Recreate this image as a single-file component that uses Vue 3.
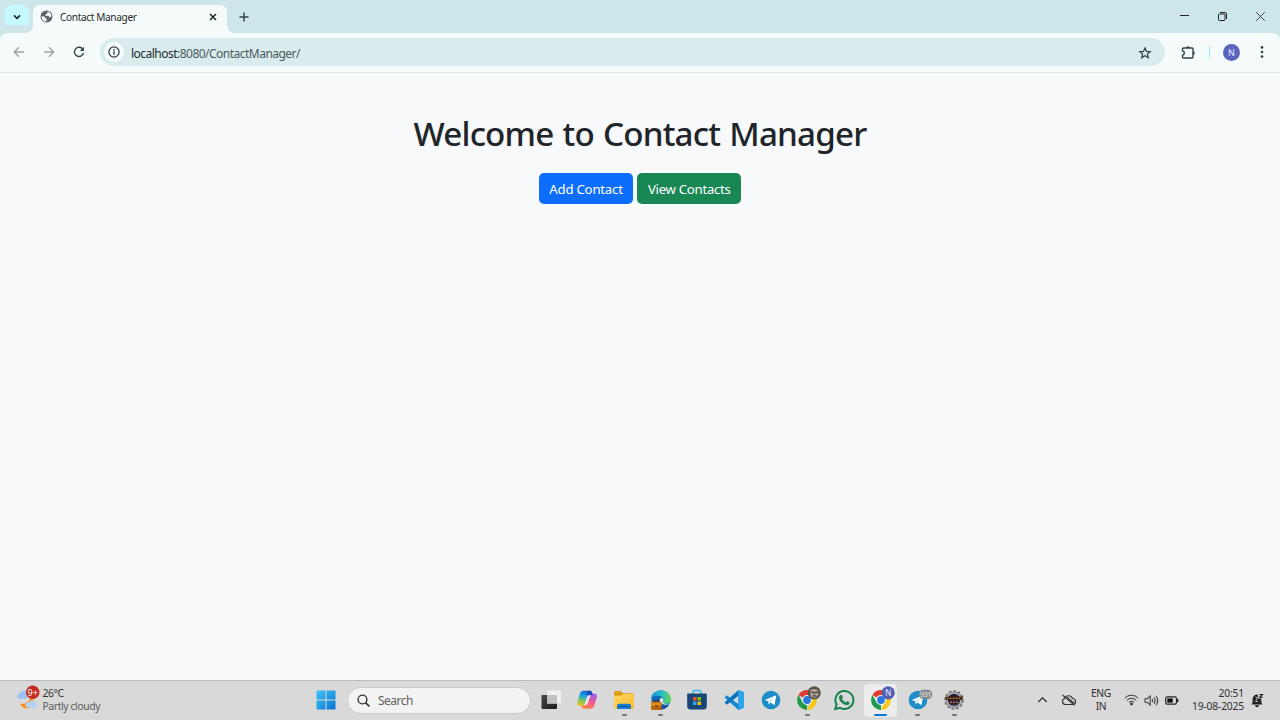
<script setup>
const tray = ['ENG', 'IN']
</script>

<template>
  <div class="screen">
    <header class="tabs">
      <div class="tab-search">
        <svg width="10" height="10" viewBox="0 0 10 10"><path d="M2 3.4 5 6.4 8 3.4" fill="none" stroke="#14282b" stroke-width="1.6" /></svg>
      </div>
      <div class="tab">
        <svg class="globe" width="13" height="13" viewBox="0 0 13 13">
          <circle cx="6.5" cy="6.5" r="6" fill="#5c6369" />
          <path d="M1.5 6.2C3.6 6 5.6 6.6 5.5 8.2L7 9.1 6.2 11.6C3.2 11.5 1.3 9 1.5 6.2ZM7.3 1.5C9.8 1.7 11.4 3.7 11.6 6.2L9.6 7.7 8.7 5.9 5.5 5.8 5.6 4.1 7.3 3.8Z" fill="#eef4f5" />
        </svg>
        <span class="tab-title">Contact Manager</span>
        <svg class="close" width="8" height="8" viewBox="0 0 8 8"><path d="M1 1 7 7M7 1 1 7" stroke="#14282b" stroke-width="1.5" /></svg>
      </div>
      <svg class="plus" width="10" height="10" viewBox="0 0 10 10"><path d="M5 .5V9.5M.5 5H9.5" stroke="#2c4347" stroke-width="1.4" /></svg>
      <div class="window-controls">
        <svg width="11" height="11" viewBox="0 0 11 11"><path d="M1 4.5H10" stroke="#222" /></svg>
        <svg width="11" height="11" viewBox="0 0 11 11"><rect x="1.5" y="3" width="6.5" height="6.5" rx="1" fill="none" stroke="#222" /><path d="M3 1.5H8Q9.5 1.5 9.5 3V8" fill="none" stroke="#222" /></svg>
        <svg width="11" height="11" viewBox="0 0 11 11"><path d="M1.2 1.2 9.8 9.8M9.8 1.2 1.2 9.8" stroke="#333" stroke-width=".9" /></svg>
      </div>
    </header>

    <nav class="toolbar">
      <svg class="nav-icon" width="12" height="12" viewBox="0 0 12 12"><path d="M11 6H1.5M6 1.2 1.3 6 6 10.8" fill="none" stroke="#9ba5a7" stroke-width="1.4" /></svg>
      <svg class="nav-icon" width="12" height="12" viewBox="0 0 12 12"><path d="M1 6H10.5M6 1.2 10.7 6 6 10.8" fill="none" stroke="#9ba5a7" stroke-width="1.4" /></svg>
      <svg class="nav-icon" width="12" height="12" viewBox="0 0 12 12"><path d="M10 3.5A4.6 4.6 0 1 0 10.5 7" fill="none" stroke="#2c4347" stroke-width="1.4" /><path d="M10.9.8V4.9H6.8Z" fill="#2c4347" /></svg>
      <div class="address">
        <span class="info">
          <svg width="12" height="12" viewBox="0 0 12 12"><circle cx="6" cy="6" r="5.1" fill="none" stroke="#27373a" stroke-width="1.2" /><path d="M6 5.2V8.8M6 3.1V4.4" stroke="#27373a" stroke-width="1.3" /></svg>
        </span>
        <span class="url"><b>localhost</b>:8080/ContactManager/</span>
        <svg class="star" width="14" height="14" viewBox="0 0 14 14"><path d="M7 1.9 8.5 5.4 12.2 5.7 9.4 8.1 10.3 11.8 7 9.8 3.7 11.8 4.6 8.1 1.8 5.7 5.5 5.4Z" fill="none" stroke="#2c4347" stroke-width="1.2" /></svg>
      </div>
      <svg class="ext" width="15" height="15" viewBox="0 0 15 15"><path d="M2.5 3H11Q12 3 12 4V12Q12 13 11 13H2.5Q1.5 13 1.5 12V10.2C3.9 9.8 3.9 6.2 1.5 5.8V4Q1.5 3 2.5 3Z" fill="none" stroke="#2c4347" stroke-width="1.4" /><path d="M5.2 3A1.7 1.7 0 0 1 8.6 3ZM12 6.2A1.8 1.8 0 0 1 12 9.8Z" fill="#2c4347" /></svg>
      <i class="divider"></i>
      <span class="avatar">N</span>
      <svg class="dots" width="4" height="14" viewBox="0 0 4 14"><g fill="#2c4347"><circle cx="2" cy="2.4" r="1.35" /><circle cx="2" cy="7" r="1.35" /><circle cx="2" cy="11.6" r="1.35" /></g></svg>
    </nav>

    <main class="page">
      <h1>Welcome to Contact Manager</h1>
      <div class="actions">
        <a class="btn add">Add Contact</a>
        <a class="btn view">View Contacts</a>
      </div>
    </main>

    <footer class="taskbar">
      <div class="weather">
        <svg width="26" height="26" viewBox="0 0 26 26">
          <path d="M5 18.5C10 20 14 17 15.5 12 20 14 20 22 13 23.5 9 24 6 21.5 5 18.5Z" fill="#f3972b" />
          <path d="M4.5 13.8A2.9 2.9 0 0 1 4.5 8.2 5 5 0 0 1 12 7V13.8Z" fill="#9dc3f5" />
          <path d="M13 22.6A2.6 2.6 0 0 1 13.6 17.4 4 4 0 0 1 20.5 18 2.4 2.4 0 0 1 20.8 22.6Z" fill="#b7d2f8" />
          <circle cx="17.7" cy="7.3" r="6.8" fill="#c52b20" />
          <text x="17.7" y="10.5" text-anchor="middle" fill="#fff" font-size="9">9+</text>
        </svg>
        <div class="weather-text"><span>26°C</span><span class="muted">Partly cloudy</span></div>
      </div>

      <div class="apps">
        <svg class="start" width="20" height="20" viewBox="0 0 20 20">
          <defs><linearGradient id="win" x1="0" y1="0" x2="1" y2="1"><stop stop-color="#3fc4f5" /><stop offset="1" stop-color="#0873d3" /></linearGradient></defs>
          <path d="M.5.5H9.5V9.5H.5ZM10.5.5H19.5V9.5H10.5ZM.5 10.5H9.5V19.5H.5ZM10.5 10.5H19.5V19.5H10.5Z" fill="url(#win)" />
        </svg>
        <div class="search">
          <svg width="13" height="13" viewBox="0 0 13 13"><circle cx="5.5" cy="5.5" r="4.4" fill="none" stroke="#333" stroke-width="1.4" /><path d="M8.8 8.8 12 12" stroke="#333" stroke-width="1.7" stroke-linecap="round" /></svg>
          <span>Search</span>
        </div>

        <div class="app">
          <svg width="24" height="24" viewBox="0 0 24 24"><defs><linearGradient id="tv" x1="0" y1="0" x2="1" y2="1"><stop stop-color="#454545" /><stop offset="1" stop-color="#1e1e1e" /></linearGradient></defs><rect x="2.5" y="7" width="15.5" height="14" rx="1" fill="url(#tv)" /><rect x="8" y="2.5" width="14" height="13" rx="1" fill="#f0f0f0" /><path d="M8 7H18V15.5H8Z" fill="#c2c2c2" /></svg>
        </div>
        <div class="app">
          <svg width="24" height="24" viewBox="0 0 24 24">
            <defs>
              <linearGradient id="cp1" x1=".5" y1="0" x2=".25" y2="1"><stop stop-color="#155ed6" /><stop offset=".35" stop-color="#1aa6df" /><stop offset=".65" stop-color="#76c55a" /><stop offset="1" stop-color="#f1c52a" /></linearGradient>
              <linearGradient id="cp2" x1=".7" y1="0" x2=".3" y2="1"><stop stop-color="#a35bea" /><stop offset=".5" stop-color="#ee5792" /><stop offset="1" stop-color="#fb843f" /></linearGradient>
            </defs>
            <path d="M8.2 2.7H15Q16.7 2.7 17.2 5L17.8 7H14.7Q12.7 7 12 9.3L9.8 16.3Q9.1 18 7 18H4.5Q1.5 18 2.3 14L5 5.3Q5.8 2.7 8.2 2.7Z" fill="url(#cp1)" />
            <path d="M15.8 20.8H9Q7.3 20.8 6.8 18.5L6.4 17.5H9Q11.2 17.5 12 14.2L14.2 7.5Q14.8 5.8 17 5.8H19.5Q22.5 5.8 21.7 9.5L19 18.3Q18.2 20.8 15.8 20.8Z" fill="url(#cp2)" />
            <path d="M12.5 2.7H15Q16.7 2.7 17.2 5L17.8 7H14.7Q12.9 7 12.2 8.8Z" fill="#1b49b8" />
            <path d="M12.2 8.8Q12.9 7 14.7 7L15.5 7.6 12.6 15.8Q11.8 17.4 8.6 17.3L9.8 16.3Z" fill="#e9e5ed" />
          </svg>
        </div>
        <div class="app">
          <svg width="24" height="24" viewBox="0 0 24 24"><defs><linearGradient id="fold" x1="0" y1="0" x2="1" y2="1"><stop stop-color="#ffd764" /><stop offset="1" stop-color="#f6bb31" /></linearGradient></defs><path d="M2 4.5Q2 3 3.5 3H9L11 5.2H20.5Q22 5.2 22 7V12H2Z" fill="#df9d18" /><path d="M2 7.8H9.2L11.4 6H21Q22 6 22 7.2V20Q22 21 21 21H3Q2 21 2 20Z" fill="url(#fold)" /><path d="M5 21V18Q5 15.8 7.2 15.8H16.8Q19 15.8 19 18V21Z" fill="#137bd2" /><path d="M7.5 18.5H16.5" stroke="#075696" /></svg>
          <i class="running"></i>
        </div>
        <div class="app">
          <svg width="24" height="24" viewBox="0 0 24 24">
            <defs><linearGradient id="ed" x1="0" y1=".3" x2="1" y2=".4"><stop stop-color="#1592de" /><stop offset=".5" stop-color="#29bdca" /><stop offset="1" stop-color="#61d957" /></linearGradient></defs>
            <circle cx="12" cy="11.8" r="9.6" fill="#1266b8" />
            <path d="M1.8 10.5C3 -.1 20.8-.5 22.2 11 22.2 15.5 16.5 16.8 14.2 14.8 13.1 13.8 14.7 13.2 14.5 11.2 14 7 5.8 6.2 1.8 10.5Z" fill="url(#ed)" />
            <path d="M10 10C7.8 14.5 12 19.4 19.5 17.3 17.3 20.6 14 21.5 12 21.4 8 19 6.6 13 10 10Z" fill="#164f9c" />
            <path d="M11.3 10.2C9.5 13 12 17.3 18.2 16.6L22 15.5C17.5 16.4 14.8 15.9 14.2 14.8 13.2 13.7 14.6 13.3 14.5 11.2Q13 9.4 11.3 10.2Z" fill="#e0e0df" />
            <rect x="2" y="14" width="10.5" height="8" rx="1" fill="#b96409" /><path d="M2 14.5H12.5V17.8H2Z" fill="#dc8d1c" /><path d="M5.3 14V12.8H9.3V14M6.3 18H8.3" fill="none" stroke="#5b300c" stroke-width="1.3" />
          </svg>
          <i class="running"></i>
        </div>
        <div class="app">
          <svg width="24" height="24" viewBox="0 0 24 24"><path d="M8 6V4Q8 2.5 9.5 2.5H14.5Q16 2.5 16 4V6" fill="none" stroke="#36b6e8" stroke-width="1.5" /><path d="M2.2 5.5H21.8V18Q21.8 21.5 18.5 21.5H5.5Q2.2 21.5 2.2 18Z" fill="#174779" /><path d="M8 9H11.5V12.5H8Z" fill="#f25022" /><path d="M12.5 9H16V12.5H12.5Z" fill="#7fba00" /><path d="M8 13.5H11.5V17H8Z" fill="#25a8f0" /><path d="M12.5 13.5H16V17H12.5Z" fill="#ffb900" /></svg>
        </div>
        <div class="app">
          <svg width="24" height="24" viewBox="0 0 24 24"><path d="M16.5 2 21 4V20L16.5 22 2.5 9.5 4.8 7.3 16.5 16.2Z" fill="#1689d3" /><path d="M16.5 2V7.8L4.8 16.7 2.5 14.5Z" fill="#0873bb" /><path d="M16.5 2 22 4.2V19.8L16.5 22Z" fill="#2aa5ee" /></svg>
        </div>
        <div class="app">
          <svg width="24" height="24" viewBox="0 0 24 24"><circle cx="12" cy="12" r="9.3" fill="#1c8dc9" /><path d="M5.8 12 17.3 7.3 15.5 17.2 11.6 14.5 9.7 16.3 9.2 13.2Z" fill="#fff" /><path d="M9.2 13.2 15 9.2 11 13.8 9.7 16.3Z" fill="#b9dbed" /></svg>
        </div>
        <div class="app">
          <svg width="24" height="24" viewBox="0 0 24 24"><path d="M12 12 3.4 7.1A9.9 9.9 0 0 1 20.6 7.1Z" fill="#e13b30" /><path d="M12 12V21.9A9.9 9.9 0 0 1 3.4 7.1L8 15Z" fill="#229c4b" /><path d="M12 7H20.5A9.9 9.9 0 0 1 12 21.9L16 14Z" fill="#fac819" /><circle cx="12" cy="12" r="5" fill="#f3f7fb" /><circle cx="12" cy="12" r="3.9" fill="#2879dd" /><circle cx="19.2" cy="4.8" r="6.6" fill="#57504a" /><path d="M14.5 2.5 18 1 22 1.5 23.5 4 23 7.5 20 10 16 9Z" fill="#b3a793" /><path d="M15 4H18.3M20 4.4H23M17.5 8H21.5M19 4V6.5" fill="none" stroke="#38342f" stroke-width="1.1" /></svg>
          <i class="running"></i>
        </div>
        <div class="app">
          <svg width="24" height="24" viewBox="0 0 24 24"><path d="M3.2 21 4.6 16.4A9 9 0 1 1 8 19.8Z" fill="none" stroke="#15834c" stroke-width="2" /><path d="M8.5 7 10 7.1 11 9.7 9.9 11Q11.5 13.6 14 14.5L15.2 13.1 17.8 14.4Q17.5 17 15 17.1C11 17 7 12.8 7 9.5Q7 7.8 8.5 7Z" fill="#15834c" /></svg>
        </div>
        <div class="app active">
          <svg width="24" height="24" viewBox="0 0 24 24"><path d="M12 12 3.4 7.1A9.9 9.9 0 0 1 20.6 7.1Z" fill="#e13b30" /><path d="M12 12V21.9A9.9 9.9 0 0 1 3.4 7.1L8 15Z" fill="#229c4b" /><path d="M12 7H20.5A9.9 9.9 0 0 1 12 21.9L16 14Z" fill="#fac819" /><circle cx="12" cy="12" r="5" fill="#f3f7fb" /><circle cx="12" cy="12" r="3.9" fill="#2879dd" /><circle cx="19.2" cy="4.8" r="6.6" fill="#5360b5" /><text x="19.2" y="7.8" text-anchor="middle" fill="#e9ecff" font-size="8">N</text></svg>
          <i class="running"></i>
        </div>
        <div class="app">
          <svg width="24" height="24" viewBox="0 0 24 24"><circle cx="12" cy="12" r="9.3" fill="#1c8dc9" /><path d="M5.8 12 17.3 7.3 15.5 17.2 11.6 14.5 9.7 16.3 9.2 13.2Z" fill="#fff" /><path d="M9.2 13.2 15 9.2 11 13.8 9.7 16.3Z" fill="#b9dbed" /><rect x="13" y="1.8" width="13.3" height="9.2" rx="4.4" fill="#858b8d" /><text x="19.6" y="9" text-anchor="middle" fill="#e7e7e7" font-size="7" letter-spacing="-.3">931</text></svg>
          <i class="running"></i>
        </div>
        <div class="app">
          <svg width="24" height="24" viewBox="0 0 24 24"><circle cx="12" cy="12" r="9" fill="none" stroke="#777879" stroke-width="1.6" stroke-dasharray="2.8 1.8" /><circle cx="12" cy="12" r="8" fill="#b9b9ba" stroke="#77777a" stroke-width=".8" /><circle cx="12" cy="12" r="6.2" fill="#25233a" /><path d="M2.8 8.8 21.2 8.5 20 12H4.3Z" fill="#3a2015" /><path d="M4.5 10.4H19.5M8 14.3H16" stroke="#bf7131" stroke-width="1.4" stroke-dasharray="2 1" /><path d="M9.5 17.2H15" stroke="#6a548e" /></svg>
          <i class="running"></i>
        </div>
      </div>

      <div class="tray">
        <svg class="chev" width="11" height="8" viewBox="0 0 11 8"><path d="M1.3 6 5.5 1.8 9.7 6" fill="none" stroke="#2c2c2c" stroke-width="1.2" /></svg>
        <svg class="cloud" width="15" height="12" viewBox="0 0 15 12"><path d="M4 10.5A3.1 3.1 0 0 1 3.6 4.5 4.2 4.2 0 0 1 11.5 4.5 3 3 0 0 1 11.5 10.5Z" fill="none" stroke="#333" stroke-width="1.2" /><path d="M1.5 1 13.5 11.3M6 3.2 12.8 9" stroke="#333" stroke-width="1.1" /></svg>
        <div class="lang"><span v-for="line in tray" :key="line">{{ line }}</span></div>
        <svg class="wifi" width="15" height="12" viewBox="0 0 15 12"><g fill="none" stroke="#333" stroke-width="1"><path d="M.8 4.2A9 9 0 0 1 14.2 4.2M2.8 6.4A6.3 6.3 0 0 1 12.2 6.4M4.8 8.5A3.5 3.5 0 0 1 10.2 8.5" /></g><circle cx="7.5" cy="10" r="1.4" fill="#333" /></svg>
        <svg class="sound" width="15" height="13" viewBox="0 0 15 13"><g fill="none" stroke="#444" stroke-width="1.1"><path d="M1 4.7H3.2L6.2 2V11L3.2 8.3H1Z" /><path d="M8 4.7Q9.3 6.5 8 8.3M10 3.2Q12.2 6.5 10 9.8M12 1.7Q15.5 6.5 12 11.3" /></g></svg>
        <svg class="battery" width="14" height="9" viewBox="0 0 14 9"><rect x=".7" y=".9" width="10.8" height="7.2" rx="1.6" fill="none" stroke="#222" stroke-width="1.2" /><rect x="2.3" y="2.4" width="5.5" height="4.2" fill="#111" /><path d="M12.7 3V6" stroke="#222" stroke-width="1.4" /></svg>
        <div class="clock"><span>20:51</span><span>19-08-2025</span></div>
        <svg class="bell" width="13" height="15" viewBox="0 0 13 15"><path d="M.5 11.5 1.6 9.3V5.6A4.4 4.4 0 0 1 7 1.7V5.5H10.3V9.3L11.4 11.5ZM4 12.2H8A2 2 0 0 1 4 12.2Z" fill="#222" /><path d="M4.4 4.4H6.6L4.7 8.4H7.2" fill="none" stroke="#d9d9d9" stroke-width=".8" /><path d="M8.3 1.5H11.5L8.6 4.3H11.8" fill="none" stroke="#222" stroke-width="1.1" /></svg>
      </div>
    </footer>
  </div>
</template>

<style>
body { margin: 0; overflow: hidden; }
</style>

<style scoped>
* { box-sizing: border-box; }
svg { display: block; flex: none; overflow: visible; }
.screen { width: 1280px; height: 720px; display: flex; flex-direction: column; overflow: hidden; background: #f8f9fb; font-family: "Noto Sans", "Open Sans", sans-serif; color: #212529; }
.tabs { height: 33px; flex: none; display: flex; background: #cde6ea; padding-left: 5px; }
.tab-search { width: 24px; height: 23px; margin: 5px 4px 0 0; border-radius: 8px; background: #c5f9ff; display: flex; align-items: center; justify-content: center; }
.tab { position: relative; width: 194px; height: 28px; margin-top: 5px; border-radius: 7px 7px 0 0; background: #f5fbfb; display: flex; align-items: center; padding: 0 10px 5px 7px; }
.tab::before, .tab::after { content: ""; position: absolute; bottom: 0; width: 7px; height: 7px; }
.tab::before { left: -7px; background: radial-gradient(circle at 0 0, transparent 6.5px, #f5fbfb 7px); }
.tab::after { right: -7px; background: radial-gradient(circle at 100% 0, transparent 6.5px, #f5fbfb 7px); }
.tab-title { margin-left: 7px; font-size: 10.1px; letter-spacing: -.36px; color: #1f2a2c; white-space: nowrap; }
.close { margin-left: auto; }
.plus { margin: 12px 0 0 12px; }
.window-controls { margin: 11px 14px 0 auto; display: flex; gap: 27px; }
.toolbar { height: 39.5px; flex: none; display: flex; align-items: center; background: #f5fbfb; border-bottom: 1.5px solid #dae8ea; padding: 0 16px 0 12.5px; border-radius: 7px 7px 0 0; box-shadow: 0 -8px 0 #cde6ea; }
.nav-icon { margin-right: 18px; }
.address { width: 1065px; height: 28px; margin-left: -2.5px; border-radius: 14px; background: #daebed; display: flex; align-items: center; padding: 0 13px 0 4px; }
.info { width: 20px; height: 20px; border-radius: 50%; background: #f5fbfb; display: flex; align-items: center; justify-content: center; }
.url { margin: 2px 0 0 7px; font-size: 12px; letter-spacing: -.52px; color: #4b5a5d; white-space: nowrap; }
.url b { font-weight: 400; color: #1d2a2d; }
.star { margin: 1px 0 0 auto; }
.ext { margin-left: 15.5px; }
.divider { width: 1.5px; height: 13px; margin-left: 13px; background: #a3ecf7; }
.avatar { width: 17px; height: 17px; margin-left: 13px; border-radius: 50%; background: #5965bd; color: #e8ebff; font-size: 9px; display: flex; align-items: center; justify-content: center; }
.dots { margin-left: auto; }
.page { flex: 1; display: flex; flex-direction: column; align-items: center; padding-top: 38.5px; }
h1 { margin: 0; font-size: 33.2px; line-height: 46px; font-weight: 500; letter-spacing: -.8px; word-spacing: 1.2px; white-space: nowrap; }
.actions { display: flex; gap: 4px; margin-top: 15.5px; }
.btn { height: 31.5px; display: flex; align-items: center; justify-content: center; padding-top: 1px; border-radius: 5px; color: #fff; font-size: 13.2px; white-space: nowrap; }
.add { width: 94.5px; background: #0d6efd; letter-spacing: -.22px; }
.view { width: 104px; background: #198754; letter-spacing: -.28px; }
.taskbar { position: relative; height: 40px; flex: none; display: flex; background: #d9d9d9; border-top: 1px solid #b9bcc0; padding-bottom: 1px; font-size: 10.3px; color: #303030; }
.weather { display: flex; align-items: center; margin-left: 15px; width: 300px; }
.weather svg { margin-bottom: 4px; }
.weather-text { display: flex; flex-direction: column; margin-left: 1.5px; line-height: 13px; letter-spacing: -.36px; }
.muted { color: #5c5c5c; }
.apps { display: flex; align-items: center; }
.start { margin: 0 11px 0 1px; }
.search { width: 184px; height: 27px; border: 1px solid #cbcbcb; border-radius: 14px; background: #f3f3f3; display: flex; align-items: center; padding-left: 9px; gap: 8px; margin-right: 1.3px; font-size: 12px; color: #606060; letter-spacing: -.5px; }
.app { position: relative; width: 36.7px; height: 33px; display: flex; align-items: center; justify-content: center; }
.app svg { position: relative; }
.active::before { content: ""; position: absolute; inset: 0 2px; border-radius: 4px; background: #ececec; }
.running { position: absolute; bottom: .5px; width: 5px; height: 2.5px; border-radius: 1px; background: #777; }
.active .running { width: 13px; background: #0878d2; }
.tray { margin-left: auto; padding-right: 16px; display: flex; align-items: center; }
.lang, .clock { display: flex; flex-direction: column; line-height: 13px; letter-spacing: -.3px; }
.lang { width: 26px; align-items: center; margin: 0 10px 0 12px; }
.cloud { margin-left: 13px; }
.sound { margin-left: 5px; }
.battery { margin-left: 6px; }
.clock { width: 60px; align-items: flex-end; margin-left: 5px; letter-spacing: -.18px; }
.bell { margin-left: 7px; }
</style>
